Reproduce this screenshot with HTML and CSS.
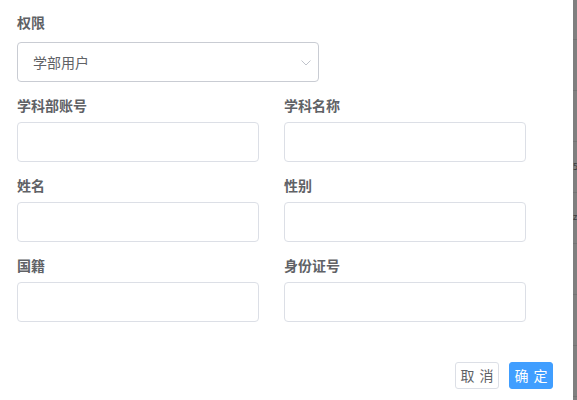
FILE: index.html
```html
<!DOCTYPE html>
<html lang="zh">
<head>
<meta charset="utf-8">
<title>表单</title>
<link rel="stylesheet" href="styles.css">
</head>
<body>
<div class="screen">
  <div class="dialog">
    <div class="item item-first">
      <div class="label">权限</div>
      <div class="select">
        <span class="select-text">学部用户</span>
        <svg class="chevron" width="10" height="6" viewBox="0 0 10 6"><path d="M0.5 0.5 L5 5 L9.5 0.5" fill="none" stroke="#c0c4cc" stroke-width="1"/></svg>
      </div>
    </div>
    <div class="grid">
      <div class="item"><div class="label">学科部账号</div><div class="input"></div></div>
      <div class="item"><div class="label">学科名称</div><div class="input"></div></div>
      <div class="item"><div class="label">姓名</div><div class="input"></div></div>
      <div class="item"><div class="label">性别</div><div class="input"></div></div>
      <div class="item"><div class="label">国籍</div><div class="input"></div></div>
      <div class="item"><div class="label">身份证号</div><div class="input"></div></div>
    </div>
    <div class="footer">
      <button class="btn btn-cancel">取 消</button>
      <button class="btn btn-primary">确 定</button>
    </div>
  </div>
  <div class="mask">
    <span class="mask-glyph g1">5</span>
    <span class="mask-glyph g2">z</span>
  </div>
</div>
</body>
</html>
```

FILE: styles.css
```css
html, body {
  margin: 0;
  padding: 0;
  background: #ffffff;
}
body {
  font-family: "Noto Sans CJK SC", "Microsoft YaHei", sans-serif;
  color: #606266;
}
.screen {
  display: flex;
  width: 577px;
  height: 400px;
  overflow: hidden;
}
.dialog {
  width: 573px;
  flex: none;
  box-sizing: border-box;
  padding: 12px 20px 0 17px;
  background: #ffffff;
}
.item {
  display: flex;
  flex-direction: column;
  margin-bottom: 13px;
}
.label {
  font-size: 14px;
  line-height: 20px;
  height: 20px;
  font-weight: 700;
  color: #606266;
  margin-bottom: 7px;
}
.item-first .label {
  margin-bottom: 10px;
}
.select {
  width: 302px;
  height: 40px;
  box-sizing: border-box;
  border: 1px solid #c9ccd3;
  border-radius: 4px;
  display: flex;
  align-items: center;
  justify-content: space-between;
  padding: 0 7px 0 15px;
}
.select-text {
  font-size: 14px;
  color: #606266;
}
.chevron {
  display: block;
  margin-top: 2px;
}
.grid {
  display: grid;
  grid-template-columns: 242px 242px;
  column-gap: 25px;
}
.input {
  height: 40px;
  box-sizing: border-box;
  border: 1px solid #dcdfe6;
  border-radius: 4px;
  background: #ffffff;
}
.footer {
  display: flex;
  justify-content: flex-end;
  gap: 10px;
  margin-top: 27px;
}
.btn {
  font-family: "Noto Sans CJK SC", "Microsoft YaHei", sans-serif;
  font-size: 14px;
  height: 27px;
  width: 44px;
  padding: 0;
  border-radius: 3px;
  line-height: 25px;
  word-spacing: 2px;
  white-space: nowrap;
  cursor: pointer;
}
.btn-cancel {
  background: #ffffff;
  border: 1px solid #dcdfe6;
  color: #606266;
}
.btn-primary {
  background: #409eff;
  border: 1px solid #409eff;
  color: #ffffff;
}
.mask {
  position: relative;
  flex: 1;
  height: 400px;
  overflow: hidden;
  background-color: #7f7f7f;
  background-image: repeating-linear-gradient(to bottom, transparent 0, transparent 39px, #737373 39px, #737373 40px, transparent 40px, transparent 51px);
}
.mask-glyph {
  position: absolute;
  left: 0;
  font-family: "DejaVu Sans", sans-serif;
  font-size: 8px;
  line-height: 10px;
  color: #3a3a3a;
}
.g1 { top: 163px; }
.g2 { top: 213px; }
```
